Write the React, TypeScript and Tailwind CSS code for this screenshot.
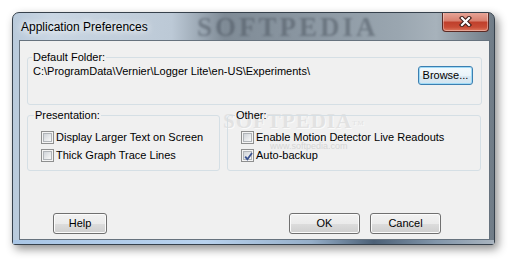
/**
 * Logger Lite — "Application Preferences" dialog, Windows 7 Aero look.
 * Plain markup; the group boxes are fieldsets so the caption sits on the border.
 */

const FONT = "font-['Liberation_Sans',Arial,sans-serif]";

function Checkbox({ checked }: { checked?: boolean }) {
  return (
    <span className="relative flex h-[13px] w-[13px] shrink-0 items-center justify-center border border-[#8e8f8f] bg-[#f4f4f4]">
      <span className="h-[9px] w-[9px] border border-[#b0b4b8] bg-[linear-gradient(135deg,#cfd3d8_0%,#e6e8ea_55%,#f8f8f8_100%)]" />
      {checked ? (
        <svg className="absolute left-[1px] top-[1px]" width="11" height="11" viewBox="0 0 11 11">
          <path d="M2.2 5.6 L4.4 8.2 L9 2" fill="none" stroke="#3b5390" strokeWidth="1.8" />
        </svg>
      ) : null}
    </span>
  );
}

function Option({ label, checked }: { label: string; checked?: boolean }) {
  return (
    <label className="flex h-[18px] items-center">
      <Checkbox checked={checked} />
      <span className="ml-[2px] text-[11px] leading-[14px] text-black">{label}</span>
    </label>
  );
}

function Button({ children, width, focused }: { children: React.ReactNode; width: string; focused?: boolean }) {
  return (
    <button
      type="button"
      className={
        focused
          ? `${width} flex h-[19px] items-center justify-center rounded-[3px] border border-[#3c7fb1] bg-[linear-gradient(#f4fafd_0%,#e9f3f9_50%,#dbe9f2_51%,#d3e5f0_100%)] text-[11px] text-black shadow-[inset_0_0_0_1px_#9fdaf6]`
          : `${width} flex h-[21px] items-center justify-center rounded-[3px] border border-[#707070] bg-[linear-gradient(#f2f2f2_0%,#ebebeb_50%,#dddddd_51%,#cfcfcf_100%)] text-[11px] text-black shadow-[inset_0_0_0_1px_#fbfbfb]`
      }
    >
      {children}
    </button>
  );
}

function Group({
  title,
  legendOffset,
  className,
  children,
}: {
  title: string;
  legendOffset: string;
  className: string;
  children: React.ReactNode;
}) {
  return (
    <fieldset className={`rounded-[3px] border border-[#d5dfe5] ${className}`}>
      <legend className={`${legendOffset} px-[1px] text-[11px] leading-[14px] text-black`}>{title}</legend>
      {children}
    </fieldset>
  );
}

export default function App() {
  return (
    <div className={`h-[267px] w-[516px] overflow-hidden bg-white pl-[12px] pt-[12px] ${FONT}`}>
      <div className="flex h-[233px] w-[483px] flex-col rounded-t-[7px] rounded-b-[3px] border border-[#36414c] bg-[linear-gradient(90deg,#b9cadb_0%,#c9d6e3_8%,#bcc9d6_33%,#7f8b96_44%,#8a96a1_60%,#9aa6b0_80%,#a7b2bb_88%,#6f7b86_100%)] shadow-[3px_4px_10px_rgba(0,0,0,0.45)]">
        {/* title bar */}
        <div className="relative flex h-[27px] shrink-0 items-start justify-between overflow-hidden">
          <span className="pointer-events-none absolute left-[184px] top-[0px] font-['Liberation_Serif',serif] text-[27px] font-bold leading-[28px] tracking-[3px] text-[#424c56]/45 blur-[0.8px]">
            SOFTPEDIA
          </span>
          <span className="relative pl-[8px] pt-[6px] text-[12px] leading-[16px] text-black [text-shadow:0_0_6px_#fff,0_0_10px_#fff]">
            Application Preferences
          </span>
          <div className="relative mr-[5px] mt-[-1px] flex h-[20px] w-[47px] items-center justify-center rounded-b-[4px] border border-t-0 border-[#5b2a24] bg-[linear-gradient(#e9a99c_0%,#d98170_45%,#c0402c_55%,#c84c36_80%,#dd7b61_100%)] shadow-[inset_0_0_0_1px_rgba(255,255,255,0.35)]">
            <svg width="13" height="11" viewBox="0 0 13 11">
              <path d="M3 2 L10 9 M10 2 L3 9" stroke="#3a1b16" strokeWidth="4.2" strokeLinecap="square" />
              <path d="M3 2 L10 9 M10 2 L3 9" stroke="#ffffff" strokeWidth="2.2" strokeLinecap="square" />
            </svg>
          </div>
        </div>

        {/* client */}
        <div className="ml-[6px] mr-[4px] flex min-h-0 flex-1 flex-col">
          <div className="relative flex h-[200px] flex-col border border-[#66727e] bg-[#f0f0f0]">
            {/* faint site watermark behind the dialog body */}
            <span className="pointer-events-none absolute left-[203px] top-[69px] font-['Liberation_Serif',serif] text-[21px] font-bold leading-[22px] tracking-[1px] text-[#e2e2e2] [text-shadow:1px_1px_0_#fafafa]">
              SOFTPEDIA<sup className="text-[7px] font-normal">TM</sup>
            </span>
            <span className="pointer-events-none absolute left-[250px] top-[100px] text-[9px] leading-[10px] text-[#d6d6d6]">
              www.softpedia.com
            </span>

            <Group title="Default Folder:" legendOffset="ml-[4px]" className="relative mx-[7px] mt-[9px]">
              <div className="flex items-start justify-between pb-[19px] pl-[5px] pr-[8px]">
                <span className="text-[11px] leading-[14px] text-black">
                  C:\ProgramData\Vernier\Logger Lite\en-US\Experiments\
                </span>
                <div className="mt-[2px]">
                  <Button width="w-[55px]" focused>
                    Browse...
                  </Button>
                </div>
              </div>
            </Group>

            <div className="relative mx-[7px] mt-[3px] flex gap-[7px]">
              <Group title="Presentation:" legendOffset="ml-[6px]" className="w-[193px]">
                <div className="pb-[6px] pl-[13px] pt-[6px]">
                  <Option label="Display Larger Text on Screen" />
                  <Option label="Thick Graph Trace Lines" />
                </div>
              </Group>
              <Group title="Other:" legendOffset="ml-[7px]" className="w-[254px]">
                <div className="pb-[6px] pl-[13px] pt-[6px]">
                  <Option label="Enable Motion Detector Live Readouts" />
                  <Option label="Auto-backup" checked />
                </div>
              </Group>
            </div>

            <div className="relative mb-[5px] mt-auto flex items-center justify-between pl-[33px] pr-[48px]">
              <Button width="w-[54px]">Help</Button>
              <div className="flex gap-[10px]">
                <Button width="w-[71px]">OK</Button>
                <Button width="w-[71px]">Cancel</Button>
              </div>
            </div>
          </div>
        </div>

        {/* bottom frame */}
        <div className="h-[4px] shrink-0 bg-[linear-gradient(90deg,#a9c6e6_0%,#b8d2ee_40%,#95aec8_62%,#4c6076_75%,#8296aa_88%,#a9b4bf_100%)]" />
      </div>
    </div>
  );
}
